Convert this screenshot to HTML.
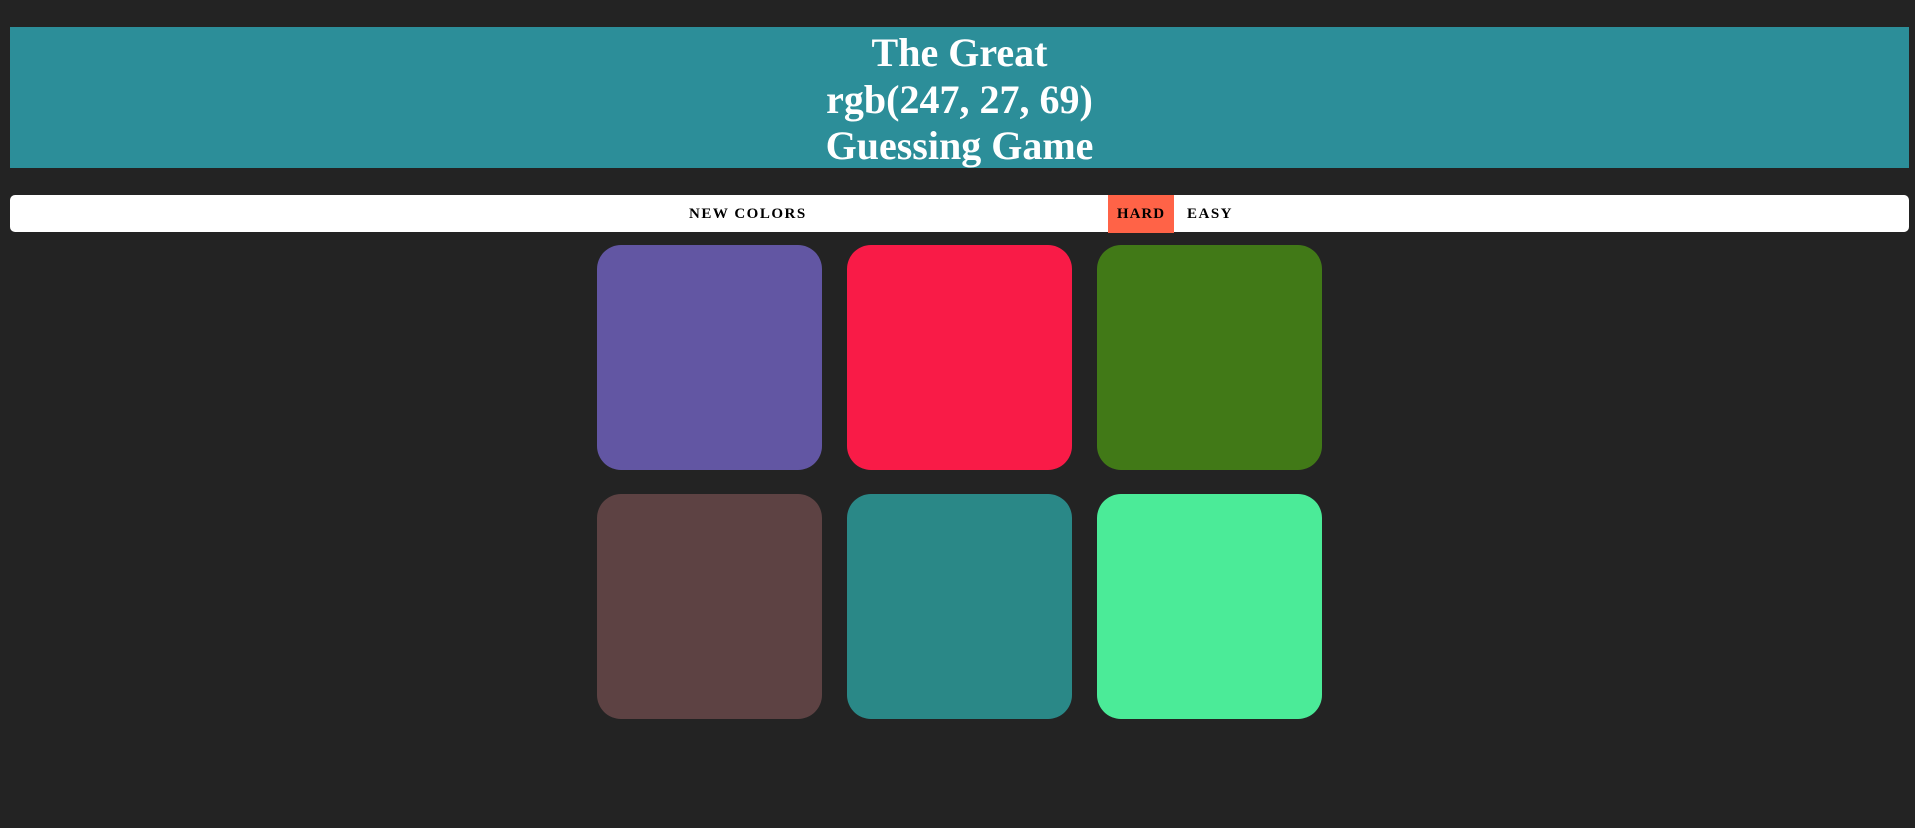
<!DOCTYPE html>
<html><head><style>
body{margin:0;background:#232323;width:1915px;height:828px;position:relative;overflow:hidden;font-family:"Liberation Serif",serif;}
h1{position:absolute;left:10px;top:27px;width:1899px;height:141px;margin:0;background:#2c8e99;color:#fff;text-align:center;font-size:40px;line-height:46.5px;font-weight:bold;padding-top:3px;box-sizing:border-box;}
#bar{position:absolute;left:10px;top:195px;width:1899px;height:37px;background:#fff;border-radius:5px;}
#bar span{position:absolute;top:1px;height:37px;line-height:37px;font-size:15px;font-weight:bold;letter-spacing:1.5px;color:#000;}
#bar span.h{top:0;padding-top:1px;}
.sq{position:absolute;width:225px;height:225px;border-radius:24px;}
</style></head><body>
<h1>The Great<br>rgb(247, 27, 69)<br>Guessing Game</h1>
<div id="bar">
<span style="left:679px">NEW COLORS</span>
<span class="h" style="left:1098px;width:66px;background:#ff6347;text-align:center;letter-spacing:1px">HARD</span>
<span style="left:1177px">EASY</span>
</div>
<div class="sq" style="left:597px;top:245px;background:#6256a3"></div>
<div class="sq" style="left:847px;top:245px;background:#f91b47"></div>
<div class="sq" style="left:1097px;top:245px;background:#417917"></div>
<div class="sq" style="left:597px;top:494px;background:#5d4243"></div>
<div class="sq" style="left:847px;top:494px;background:#2a8887"></div>
<div class="sq" style="left:1097px;top:494px;background:#4beb98"></div>
</body></html>
